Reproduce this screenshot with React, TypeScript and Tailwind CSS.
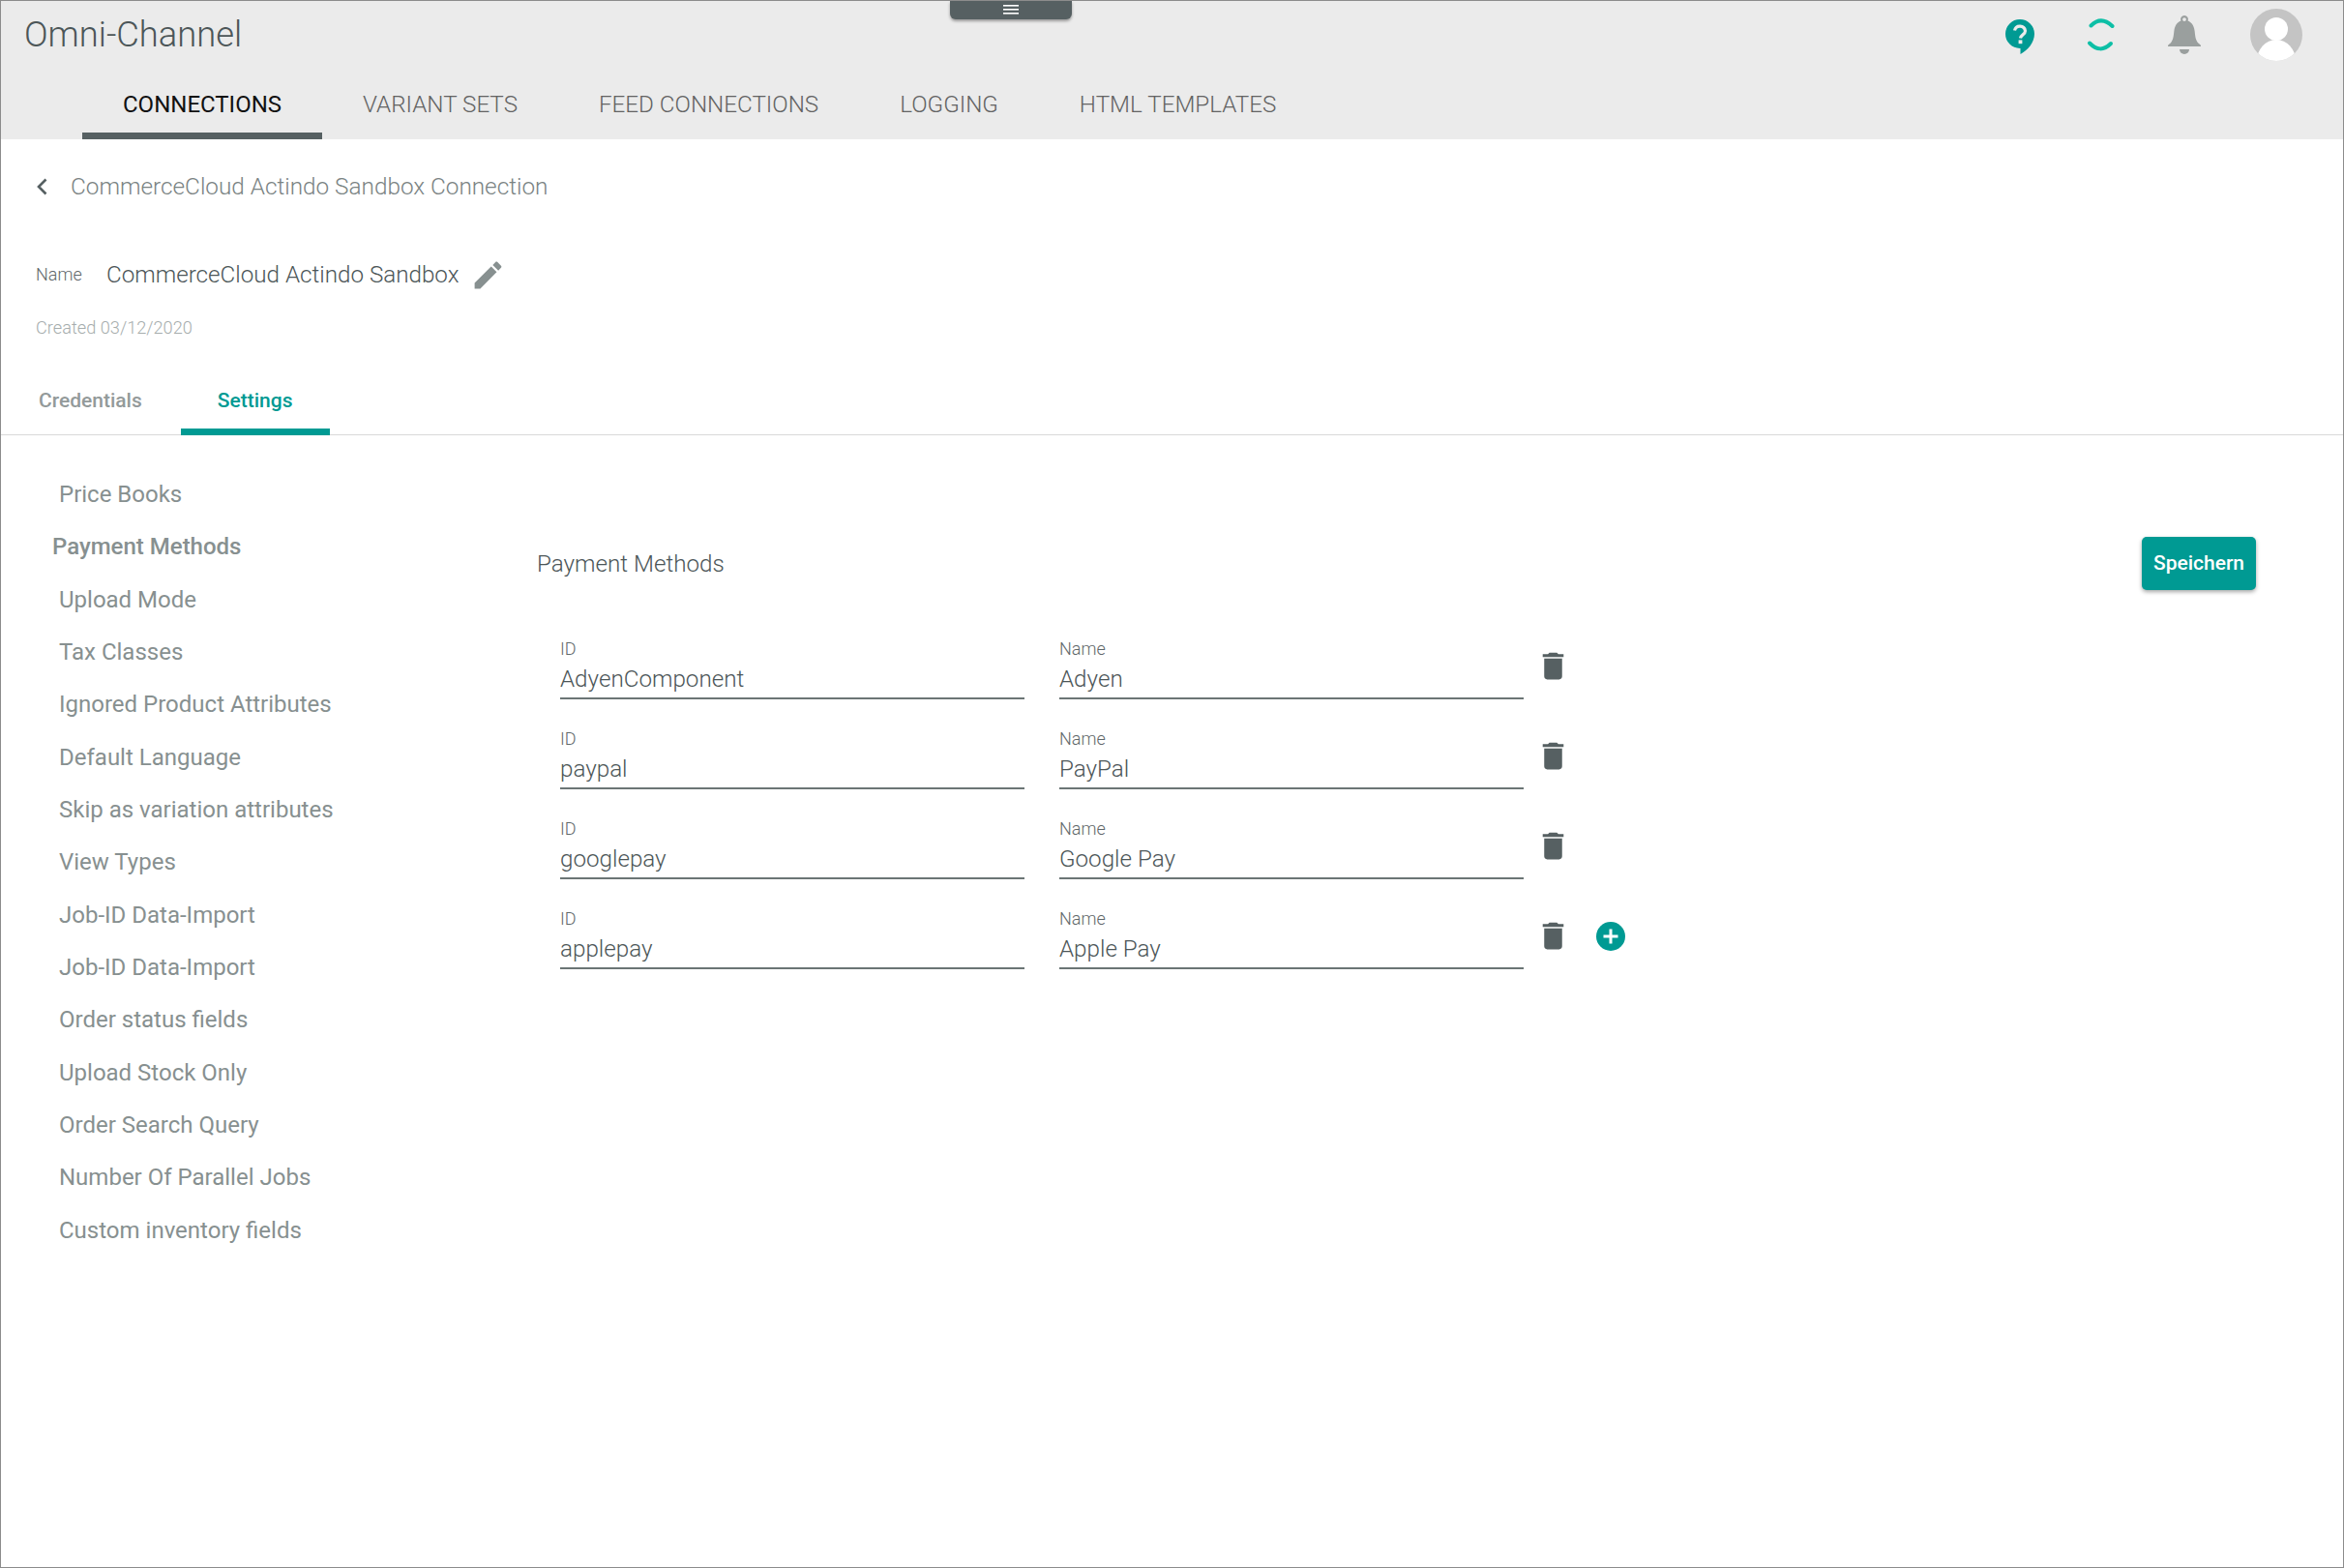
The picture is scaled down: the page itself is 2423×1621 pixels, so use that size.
import React from "react";

const topTabs = ["CONNECTIONS", "VARIANT SETS", "FEED CONNECTIONS", "LOGGING", "HTML TEMPLATES"];
const sideItems = [
  "Price Books",
  "Payment Methods",
  "Upload Mode",
  "Tax Classes",
  "Ignored Product Attributes",
  "Default Language",
  "Skip as variation attributes",
  "View Types",
  "Job-ID Data-Import",
  "Job-ID Data-Import",
  "Order status fields",
  "Upload Stock Only",
  "Order Search Query",
  "Number Of Parallel Jobs",
  "Custom inventory fields",
];
const rows = [
  ["AdyenComponent", "Adyen"],
  ["paypal", "PayPal"],
  ["googlepay", "Google Pay"],
  ["applepay", "Apple Pay"],
];

function Trash() {
  return (
    <svg viewBox="0 0 24 24" className="w-[37px] h-[37px] text-[#566062]" fill="currentColor">
      <path d="M6 19c0 1.1.9 2 2 2h8c1.1 0 2-.9 2-2V7H6v12zM19 4h-3.5l-1-1h-5l-1 1H5v2h14V4z" />
    </svg>
  );
}

function Field({ label, value }: { label: string; value: string }) {
  return (
    <div className="w-[480px] h-[93px] flex flex-col justify-end border-b-[2px] border-[#6b7575]">
      <div className="text-[18px] leading-[20px] text-[#5f686a] font-light">{label}</div>
      <div className="text-[24.200px] leading-[30px] mt-[6px] mb-[4px] text-[#4c5658] font-light">{value}</div>
    </div>
  );
}

export default function App() {
  return (
    <div
      className="relative w-[2423px] h-[1621px] border border-[#8c8c8c] bg-white overflow-hidden flex flex-col"
      style={{ fontFamily: '"Roboto", "Liberation Sans", sans-serif' }}
    >
      {/* collapse handle */}
      <div className="absolute left-[981px] top-0 w-[126px] h-[19px] bg-[#566062] rounded-b-[6px] shadow-[0_2px_3px_rgba(0,0,0,0.35)] flex items-center justify-center">
        <svg viewBox="0 0 16 12" className="w-[16px] h-[12px] -mt-[2px]" fill="#ffffff">
          <rect x="0" y="1" width="16" height="1.6" />
          <rect x="0" y="5" width="16" height="1.6" />
          <rect x="0" y="9" width="16" height="1.6" />
        </svg>
      </div>

      {/* header */}
      <header className="bg-[#ebebeb] h-[143px] flex flex-col shrink-0">
        <div className="h-[84px] flex items-start justify-between">
          <div className="pl-[24px] pt-[14px] text-[36.300px] leading-[42px] font-light text-[#4c5658]">Omni-Channel</div>
          <div className="flex items-start pr-[42px] pt-[8px]">
            {/* help */}
            <svg viewBox="0 0 30 37" className="w-[30px] h-[37px] mt-[11px] mr-[54px]">
              <path d="M15 0a15 15 0 0 1 15 15c0 9-7 17-14.500 21v-6H15A15 15 0 0 1 15 0z" fill="#009a93" />
              <path d="M9.500 11.500a5.600 5.600 0 0 1 11 .5c0 3.500-4.500 3.800-5 7.500" fill="none" stroke="#ebebeb" strokeWidth="3.200" />
              <rect x="13.600" y="21.400" width="3.800" height="3.800" fill="#ebebeb" />
            </svg>
            {/* sync */}
            <svg viewBox="0 0 30 36" className="w-[30px] h-[36px] mt-[9px] mr-[54px]">
              <path d="M4.500 8.500Q15 -2 26.500 9" fill="none" stroke="#0dbfa6" strokeWidth="4" strokeLinecap="round" />
              <path d="M3 26.500Q14 38 25 27" fill="none" stroke="#0dbfa6" strokeWidth="4" strokeLinecap="round" />
            </svg>
            {/* bell */}
            <svg viewBox="0 0 34 40" className="w-[34px] h-[40px] mt-[7px] mr-[51px]" fill="#9a9f9e">
              <path fillRule="evenodd" d="M17 0a4 4 0 0 1 3.600 5.600C25 7.600 27 11 27.600 16c.7 6 1 9 3.400 12.200 1 1.200 3 1.800 3 3.300V32H0v-.5c0-1.500 2-2.100 3-3.300C5.400 25 5.700 22 6.400 16 7 11 9 7.600 13.400 5.600A4 4 0 0 1 17 0zm0 2.200a1.900 1.900 0 1 0 0 3.800 1.900 1.900 0 0 0 0-3.800z" />
              <path d="M12 35h10a5 5 0 0 1-10 0z" />
            </svg>
            {/* avatar */}
            <svg viewBox="0 0 54 54" className="w-[54px] h-[54px]">
              <defs>
                <clipPath id="avatar-clip">
                  <circle cx="27" cy="27" r="27" />
                </clipPath>
              </defs>
              <circle cx="27" cy="27" r="27" fill="#c4c4c4" />
              <g clipPath="url(#avatar-clip)" fill="#ffffff">
                <circle cx="27" cy="21" r="12" />
                <ellipse cx="27" cy="54" rx="20" ry="22" />
              </g>
            </svg>
          </div>
        </div>
        <nav className="flex pl-[84px] h-[59px]">
          {topTabs.map((t, i) => (
            <div
              key={t}
              className={
                i === 0
                  ? "px-[42px] pt-[8px] text-[24px] leading-[30px] text-[#111111] border-b-[7px] border-[#566062]"
                  : "px-[42px] pt-[8px] text-[24.200px] leading-[30px] text-[#636363] font-light border-b-[7px] border-transparent"
              }
            >
              {t}
            </div>
          ))}
        </nav>
      </header>

      {/* breadcrumb */}
      <div className="flex items-center h-[64px] pl-[36px] mt-[17px] shrink-0">
        <svg viewBox="0 0 12 18" className="w-[12px] h-[18px] mr-[24px]" fill="none" stroke="#566062" strokeWidth="2.600">
          <path d="M10.500 1.500L3 9l7.500 7.500" />
        </svg>
        <span className="text-[24.300px] leading-[30px] text-[#7a8383] font-light">CommerceCloud Actindo Sandbox Connection</span>
      </div>

      {/* name */}
      <div className="flex items-center pl-[36px] mt-[41px] h-[36px] shrink-0">
        <span className="w-[73px] text-[18px] leading-[20px] text-[#5f686a] font-light">Name</span>
        <span className="text-[24.200px] leading-[30px] text-[#4c5658] font-light">CommerceCloud Actindo Sandbox</span>
        <svg viewBox="0 0 24 24" className="w-[37px] h-[37px] ml-[12px]" fill="#879090">
          <path d="M3 17.250V21h3.750L17.810 9.940l-3.750-3.750L3 17.250zM20.710 7.040c.39-.39.39-1.020 0-1.410l-2.340-2.340c-.39-.39-1.020-.39-1.410 0l-1.830 1.830 3.750 3.750 1.830-1.830z" />
        </svg>
      </div>

      <div className="pl-[36px] mt-[27px] text-[18.200px] leading-[20px] text-[#a6adad] font-light shrink-0">Created 03/12/2020</div>

      {/* sub tabs */}
      <div className="flex mt-[34px] border-b border-[#d9d9d9] h-[67px] shrink-0">
        <div className="pl-[39px] pr-[40px] pt-[18px] text-[21px] leading-[26px] font-medium text-[#939a9a]">Credentials</div>
        <div className="px-[38px] pt-[18px] text-[21px] leading-[26px] font-medium text-[#009a93] border-b-[7px] border-[#009a93] h-[67px]">
          Settings
        </div>
      </div>

      {/* content */}
      <div className="flex flex-1 min-h-0">
        <aside className="w-[554px] shrink-0 pt-[34px] pl-[53px]">
          {sideItems.map((s, i) => (
            <div
              key={i}
              className={
                i === 1
                  ? "h-[54.330px] flex items-center text-[24px] font-medium text-[#879090]"
                  : "h-[54.330px] flex items-center pl-[7px] text-[24px] text-[#879090]"
              }
            >
              {s}
            </div>
          ))}
        </aside>
        <main className="flex-1 pt-[105px] pr-[90px]">
          <div className="flex items-center justify-between h-[55px]">
            <span className="text-[24.200px] leading-[30px] text-[#4c5658] font-light">Payment Methods</span>
            <button className="w-[118px] h-[55px] pt-[1px] rounded-[5px] bg-[#009a93] text-white text-[21px] font-medium shadow-[0_2px_4px_rgba(0,0,0,0.35)]">
              Speichern
            </button>
          </div>
          <div className="mt-[20px] pl-[24px] flex flex-col">
            {rows.map(([id, name], i) => (
              <div key={id} className="flex items-start gap-[36px]">
                <Field label="ID" value={id} />
                <Field label="Name" value={name} />
                <div className="flex items-center gap-[26px] -ml-[24.500px] mt-[40px]">
                  <Trash />
                  {i === rows.length - 1 && (
                    <svg viewBox="0 0 30 30" className="w-[30px] h-[30px]">
                      <circle cx="15" cy="15" r="15" fill="#009a93" />
                      <path d="M15 7.500v15M7.500 15h15" stroke="#ffffff" strokeWidth="3" />
                    </svg>
                  )}
                </div>
              </div>
            ))}
          </div>
        </main>
      </div>
    </div>
  );
}
